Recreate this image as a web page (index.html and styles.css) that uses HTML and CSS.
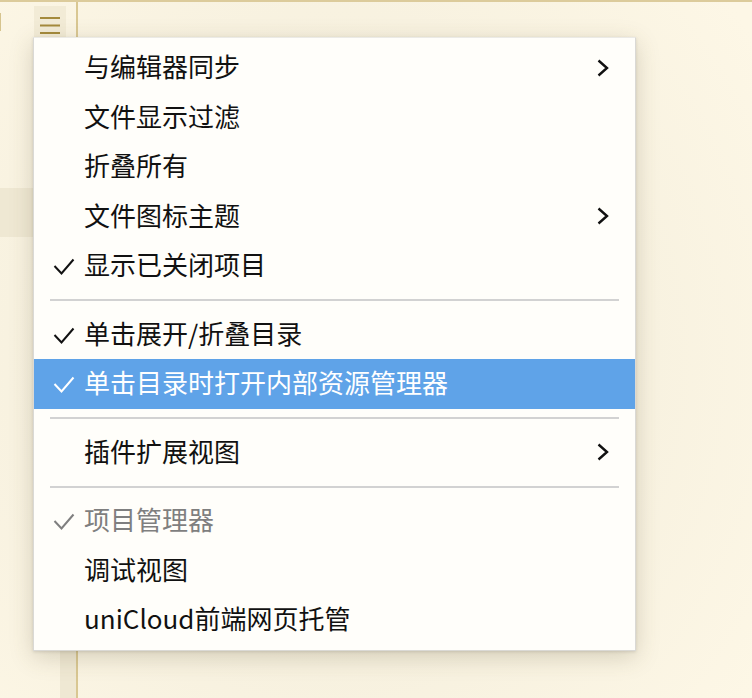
FILE: index.html
```html
<!DOCTYPE html>
<html lang="zh-CN">
<head>
<meta charset="utf-8">
<title>Menu</title>
<link rel="stylesheet" href="styles.css">
</head>
<body>
<div class="app">
  <div class="topline"></div>
  <div class="main">
    <div class="sidebar">
      <div class="toolbar">
        <span class="edge-mark"></span>
        <button class="hamburger" type="button" aria-label="menu">
          <svg width="20" height="17" viewBox="0 0 20 17"><path d="M0 1h20M0 8.5h20M0 16h20" stroke="#a48a3c" stroke-width="2" fill="none"/></svg>
        </button>
      </div>
      <div class="sidebar-body">
        <div class="tree"><div class="selected-row"></div></div>
        <div class="gutter"></div>
      </div>
    </div>
    <div class="divider"></div>
    <div class="editor"></div>
  </div>

  <div class="menu">
    <div class="item"><span class="check"></span><span class="label">与编辑器同步</span><svg class="chev" width="12" height="18" viewBox="0 0 12 18"><path d="M1.5 1.5l8.5 7.5-8.5 7.5" stroke="currentColor" stroke-width="2.4" fill="none"/></svg></div>
    <div class="item"><span class="check"></span><span class="label">文件显示过滤</span></div>
    <div class="item"><span class="check"></span><span class="label">折叠所有</span></div>
    <div class="item"><span class="check"></span><span class="label">文件图标主题</span><svg class="chev" width="12" height="18" viewBox="0 0 12 18"><path d="M1.5 1.5l8.5 7.5-8.5 7.5" stroke="currentColor" stroke-width="2.4" fill="none"/></svg></div>
    <div class="item"><span class="check"><svg width="22" height="18" viewBox="0 0 22 18"><path d="M1.5 9l7 7.5 12-14" stroke="currentColor" stroke-width="2" fill="none"/></svg></span><span class="label">显示已关闭项目</span></div>
    <div class="sep"></div>
    <div class="item"><span class="check"><svg width="22" height="18" viewBox="0 0 22 18"><path d="M1.5 9l7 7.5 12-14" stroke="currentColor" stroke-width="2" fill="none"/></svg></span><span class="label">单击展开/折叠目录</span></div>
    <div class="item active"><span class="check"><svg width="22" height="18" viewBox="0 0 22 18"><path d="M1.5 9l7 7.5 12-14" stroke="currentColor" stroke-width="2" fill="none"/></svg></span><span class="label">单击目录时打开内部资源管理器</span></div>
    <div class="sep"></div>
    <div class="item"><span class="check"></span><span class="label">插件扩展视图</span><svg class="chev" width="12" height="18" viewBox="0 0 12 18"><path d="M1.5 1.5l8.5 7.5-8.5 7.5" stroke="currentColor" stroke-width="2.4" fill="none"/></svg></div>
    <div class="sep"></div>
    <div class="item disabled"><span class="check"><svg width="22" height="18" viewBox="0 0 22 18"><path d="M1.5 9l7 7.5 12-14" stroke="currentColor" stroke-width="2" fill="none"/></svg></span><span class="label">项目管理器</span></div>
    <div class="item"><span class="check"></span><span class="label">调试视图</span></div>
    <div class="item"><span class="check"></span><span class="label">uniCloud前端网页托管</span></div>
  </div>
</div>
</body>
</html>
```

FILE: styles.css
```css
html, body {
  margin: 0;
  padding: 0;
}
body {
  width: 752px;
  height: 698px;
  overflow: hidden;
  font-family: "Noto Sans CJK SC", "Noto Sans", sans-serif;
  background: #fdf7e6;
}
.app {
  position: relative;
  width: 752px;
  height: 698px;
  display: flex;
  flex-direction: column;
  background: radial-gradient(ellipse 520px 560px at 330px 360px, #efe9d6 0%, #f7f1df 55%, #fdf7e6 100%);
}
.topline {
  height: 2px;
  background: #dccb9b;
  flex: none;
}
.main {
  flex: 1;
  display: flex;
  min-height: 0;
}
.sidebar {
  width: 76px;
  display: flex;
  flex-direction: column;
}
.toolbar {
  height: 38px;
  position: relative;
  display: flex;
  align-items: flex-start;
  flex: none;
}
.edge-mark {
  width: 1px;
  height: 18px;
  margin-top: 11px;
  background: #d6c48e;
}
.hamburger {
  margin: 4px 0 0 33px;
  width: 32px;
  height: 34px;
  padding: 0;
  border: 0;
  background: #f2ebd6;
  display: flex;
  align-items: center;
  justify-content: center;
}
.hamburger svg { display: block; margin-top: 4px; }
.sidebar-body {
  flex: 1;
  display: flex;
}
.tree {
  flex: 1;
}
.selected-row {
  margin-top: 148px;
  height: 49px;
  background: #efe8d3;
}
.gutter {
  width: 16px;
  background: #efe8d3;
}
.divider {
  width: 2px;
  background: #d9c792;
}
.editor {
  flex: 1;
}

.menu {
  position: absolute;
  left: 33px;
  top: 37px;
  width: 603px;
  padding: 5px 0 5px;
  box-sizing: border-box;
  background: #fffefa;
  border: 1px solid rgba(0, 0, 0, 0.14);
  border-top-color: rgba(0, 0, 0, 0.08);
  box-shadow: 0 6px 22px rgba(90, 80, 50, 0.22), 0 1px 3px rgba(0, 0, 0, 0.12);
  color: #111;
}
.item {
  height: 49.5px;
  display: flex;
  align-items: center;
  padding: 0 26px 0 19px;
  font-size: 26px;
  line-height: 1;
}
.check {
  width: 22px;
  height: 18px;
  margin-right: 9px;
  display: flex;
  margin-top: 1px;
}
.check svg { display: block; }
.label {
  flex: 1;
  white-space: nowrap;
  margin-top: -3px;
}
.chev { display: block; flex: none; }
.item.active {
  background: #5fa3e8;
  color: #fff;
}
.item.disabled {
  color: #7f7f7f;
}
.sep {
  height: 2px;
  background: #d2d2d2;
  margin: 8.5px 16px 8.5px 16px;
}
```
